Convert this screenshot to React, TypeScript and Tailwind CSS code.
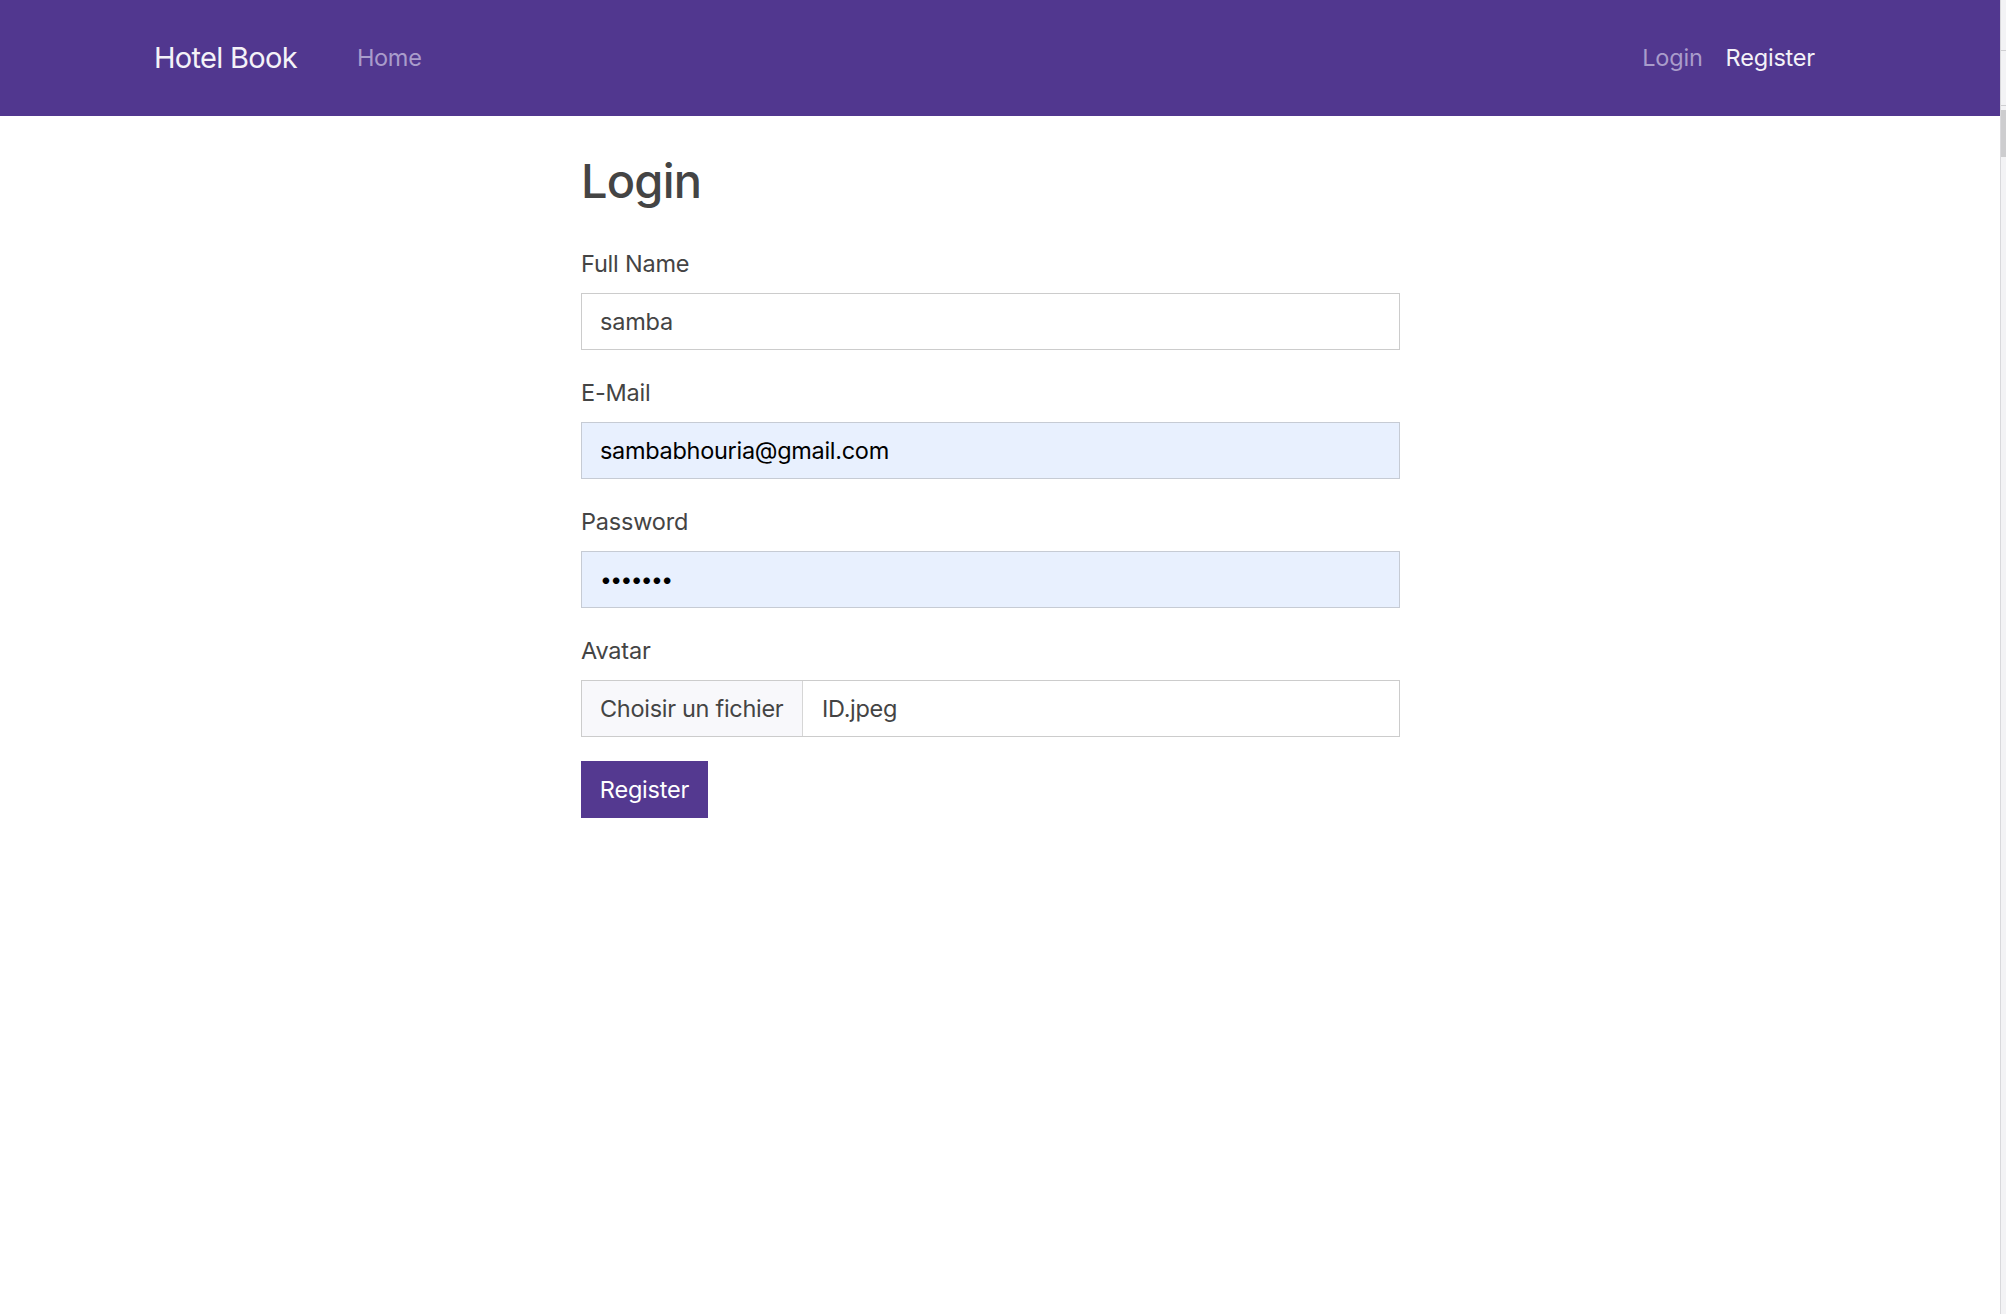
import React from 'react';

const font = { fontFamily: 'Inter, "Helvetica Neue", "Liberation Sans", sans-serif' };

const Field: React.FC<{ label: string; children: React.ReactNode }> = ({ label, children }) => (
  <div className="mb-[25px]">
    <label className="block text-[23.5px] leading-[35px] text-[#444] mb-[12px] tracking-[-0.2px]">{label}</label>
    {children}
  </div>
);

export default function App() {
  return (
    <div className="flex w-full min-h-screen bg-white" style={font}>
      {/* page */}
      <div className="flex-1 flex flex-col">
        {/* navbar */}
        <nav className="h-[116px] bg-[#51378f] flex items-center pl-[154px] pr-[185px]">
          <a className="text-[29px] text-[#f4f2f8] tracking-[-0.7px]">Hotel Book</a>
          <a className="ml-[60px] text-[23.5px] text-[#a99ccb] tracking-[-0.3px]">Home</a>
          <div className="ml-auto flex items-center gap-[23px] text-[23.5px] tracking-[-0.2px]">
            <a className="text-[#a99ccb]">Login</a>
            <a className="text-[#f4f2f8]">Register</a>
          </div>
        </nav>

        {/* form */}
        <main className="pt-[37px] pl-[581px]">
          <div className="w-[819px] tracking-[-0.2px]">
            <h2 className="text-[47px] leading-[56px] font-medium text-[#444] mb-[37px] tracking-[-0.8px]">Login</h2>

            <Field label="Full Name">
              <div className="h-[57px] border border-[#cccccc] bg-white flex items-center px-[18px] text-[23.5px] text-[#444]">
                samba
              </div>
            </Field>

            <Field label="E-Mail">
              <div className="h-[57px] border border-[#c6cbd4] bg-[#e8f0fe] flex items-center px-[18px] text-[23.5px] text-black tracking-[-0.3px]">
                sambabhouria@gmail.com
              </div>
            </Field>

            <Field label="Password">
              <div className="h-[57px] border border-[#c6cbd4] bg-[#e8f0fe] flex items-center px-[18px] text-[21px] text-black tracking-[-1.6px]">
                •••••••
              </div>
            </Field>

            <Field label="Avatar">
              <div className="h-[57px] border border-[#cccccc] bg-white flex items-stretch text-[23.5px] text-[#444] tracking-[-0.3px]">
                <div className="w-[221px] bg-[#f8f8fb] border-r border-[#d6d6d6] flex items-center pl-[18px]">
                  Choisir un fichier
                </div>
                <div className="flex items-center pl-[19px]">ID.jpeg</div>
              </div>
            </Field>

            <button className="w-[127px] h-[57px] -mt-[1px] bg-[#543990] text-white text-[23.5px] flex items-center justify-center tracking-[-0.2px]">
              Register
            </button>
          </div>
        </main>
      </div>

      {/* scrollbar remnant */}
      <div className="w-[6px] flex flex-col bg-[#f3f3f5] border-l border-[#d9d9dc]">
        <div className="h-[50px]" />
        <div className="h-px bg-[#cfcfd2]" />
        <div className="h-[54px]" />
        <div className="h-px bg-[#cfcfd2]" />
        <div className="h-[4px]" />
        <div className="h-[47px] bg-[#cdcdcf]" />
      </div>
    </div>
  );
}
